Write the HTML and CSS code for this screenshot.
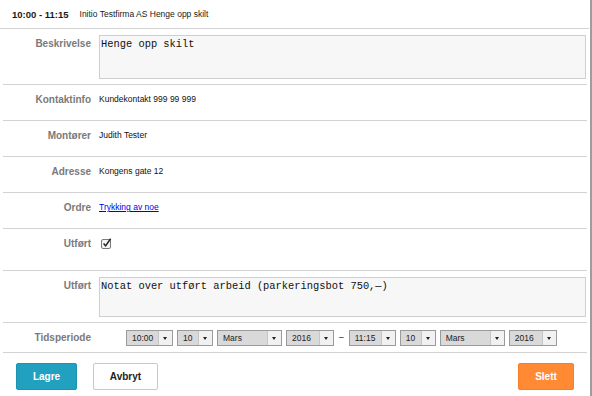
FILE: index.html
```html
<!DOCTYPE html>
<html lang="no">
<head>
    <meta charset="UTF-8">
    <meta name="viewport" content="width=device-width, initial-scale=1.0">
    <title>Oppdrag</title>
    <link rel="stylesheet" href="styles.css">
</head>
<body>
    <div class="dialog">
        <div class="dialog-head">
            <strong>10:00 - 11:15</strong>
            <span>Initio Testfirma AS Henge opp skilt</span>
        </div>
        <form class="fields">
            <div class="row row-area">
                <label class="lbl">Beskrivelse</label>
                <div class="val"><textarea class="area area-lg">Henge opp skilt</textarea></div>
            </div>
            <div class="row">
                <label class="lbl">Kontaktinfo</label>
                <div class="val">Kundekontakt 999 99 999</div>
            </div>
            <div class="row">
                <label class="lbl">Montører</label>
                <div class="val">Judith Tester</div>
            </div>
            <div class="row">
                <label class="lbl">Adresse</label>
                <div class="val">Kongens gate 12</div>
            </div>
            <div class="row">
                <label class="lbl">Ordre</label>
                <div class="val"><a href="#">Trykking av noe</a></div>
            </div>
            <div class="row row-check">
                <label class="lbl">Utført</label>
                <div class="val">
                    <svg class="check" width="11" height="11" viewBox="0 0 11 11">
                        <rect x="0.5" y="1.5" width="9" height="9" rx="1.5" fill="#f4f4f4" stroke="#7a7a7a"/>
                        <path d="M2.6 5.6 L4.6 7.9 L9.6 0.8" fill="none" stroke="#222" stroke-width="1.5"/>
                    </svg>
                </div>
            </div>
            <div class="row row-area">
                <label class="lbl">Utført</label>
                <div class="val"><textarea class="area area-sm">Notat over utført arbeid (parkeringsbot 750,—)</textarea></div>
            </div>
            <div class="row row-period">
                <label class="lbl">Tidsperiode</label>
                <div class="val period">
                    <span class="sel w-time"><select><option>10:00</option></select><span class="arrow"></span></span>
                    <span class="sel w-day"><select><option>10</option></select><span class="arrow"></span></span>
                    <span class="sel w-month"><select><option>Mars</option></select><span class="arrow"></span></span>
                    <span class="sel w-year"><select><option>2016</option></select><span class="arrow"></span></span>
                    <span class="dash">–</span>
                    <span class="sel w-time"><select><option>11:15</option></select><span class="arrow"></span></span>
                    <span class="sel w-day"><select><option>10</option></select><span class="arrow"></span></span>
                    <span class="sel w-month"><select><option>Mars</option></select><span class="arrow"></span></span>
                    <span class="sel w-year"><select><option>2016</option></select><span class="arrow"></span></span>
                </div>
            </div>
        </form>
        <div class="actions">
            <button class="btn btn-save">Lagre</button>
            <button class="btn btn-cancel">Avbryt</button>
            <button class="btn btn-delete">Slett</button>
        </div>
    </div>
</body>
</html>
```

FILE: styles.css
```css
* {
    margin: 0;
    padding: 0;
    box-sizing: border-box;
}

body {
    font-family: "Liberation Sans", Arial, sans-serif;
    color: #111;
    background: #fff;
}

.dialog {
    width: 592px;
    height: 396px;
    border-right: 2px solid #9d9d9d;
    display: flex;
    flex-direction: column;
}

.dialog-head {
    height: 29px;
    margin-right: 1px;
    padding-left: 12px;
    display: flex;
    align-items: center;
    gap: 11px;
    font-size: 8.5px;
    color: #1a1a1a;
    border-bottom: 1px solid #d2d2d2;
}

.dialog-head strong {
    font-size: 9.5px;
}

.fields {
    padding: 0 3px;
}

.row {
    display: grid;
    grid-template-columns: 88px 1fr;
    column-gap: 8px;
    padding: 7px 1px 13px 0;
    line-height: 15px;
    border-bottom: 1px solid #d2d2d2;
}

.lbl {
    text-align: right;
    font-size: 10px;
    font-weight: bold;
    color: #7a7a7a;
}

.val {
    font-size: 8.5px;
}

.val a {
    color: #0000ee;
}

.row-area {
    padding: 6px 1px 5px 0;
}

.row-area .lbl {
    padding-top: 1px;
}

.area {
    display: block;
    width: 100%;
    padding: 2px 1px;
    font-family: "Liberation Mono", "Courier New", monospace;
    font-size: 10.4px;
    line-height: 12px;
    color: #111;
    background: #f7f7f7;
    border: 1px solid #cfcfcf;
    resize: none;
}

.area-lg {
    height: 44px;
}

.area-sm {
    height: 40px;
}

.row-check .val {
    height: 21px;
}

.check {
    display: block;
    margin: 2px 0 0 2px;
}

.row-period {
    height: 30px;
    padding: 0 1px 0 0;
    align-items: center;
}

.period {
    display: flex;
    align-items: center;
    gap: 4px;
    padding-left: 27px;
}

.sel {
    position: relative;
    display: block;
    height: 16px;
    border: 1px solid #9a9a9a;
    background: #d9d9d9;
}

.sel select {
    appearance: none;
    -webkit-appearance: none;
    display: block;
    width: 100%;
    height: 100%;
    padding-left: 5px;
    border: 0;
    background: transparent;
    font-family: "Liberation Sans", Arial, sans-serif;
    font-size: 8.5px;
    color: #222;
}

.sel .arrow {
    position: absolute;
    top: 0;
    right: 0;
    bottom: 0;
    width: 14px;
    background: #f1f1f1;
    border-left: 1px solid #c6c6c6;
    pointer-events: none;
}

.sel .arrow::after {
    content: "";
    position: absolute;
    left: 4px;
    top: 6px;
    border-left: 2.5px solid transparent;
    border-right: 2.5px solid transparent;
    border-top: 3px solid #222;
}

.w-time { width: 47px; }
.w-day { width: 36px; }
.w-month { width: 65px; }
.w-year { width: 48px; }

.dash {
    margin: 0 1px;
    font-size: 8.5px;
}

.actions {
    display: flex;
    padding: 10px 16px 0 16px;
}

.btn {
    height: 27px;
    border: 1px solid;
    border-radius: 2px;
    font-family: "Liberation Sans", Arial, sans-serif;
    font-size: 10px;
    font-weight: bold;
    cursor: pointer;
}

.btn-save {
    width: 61px;
    color: #fff;
    background: #21a1bf;
    border-color: #1d93b0;
}

.btn-cancel {
    width: 65px;
    margin-left: 16px;
    color: #222;
    background: #fff;
    border-color: #c8c8c8;
}

.btn-delete {
    width: 56px;
    margin-left: auto;
    color: #fff;
    background: #ff8a33;
    border-color: #f57e27;
}
```
